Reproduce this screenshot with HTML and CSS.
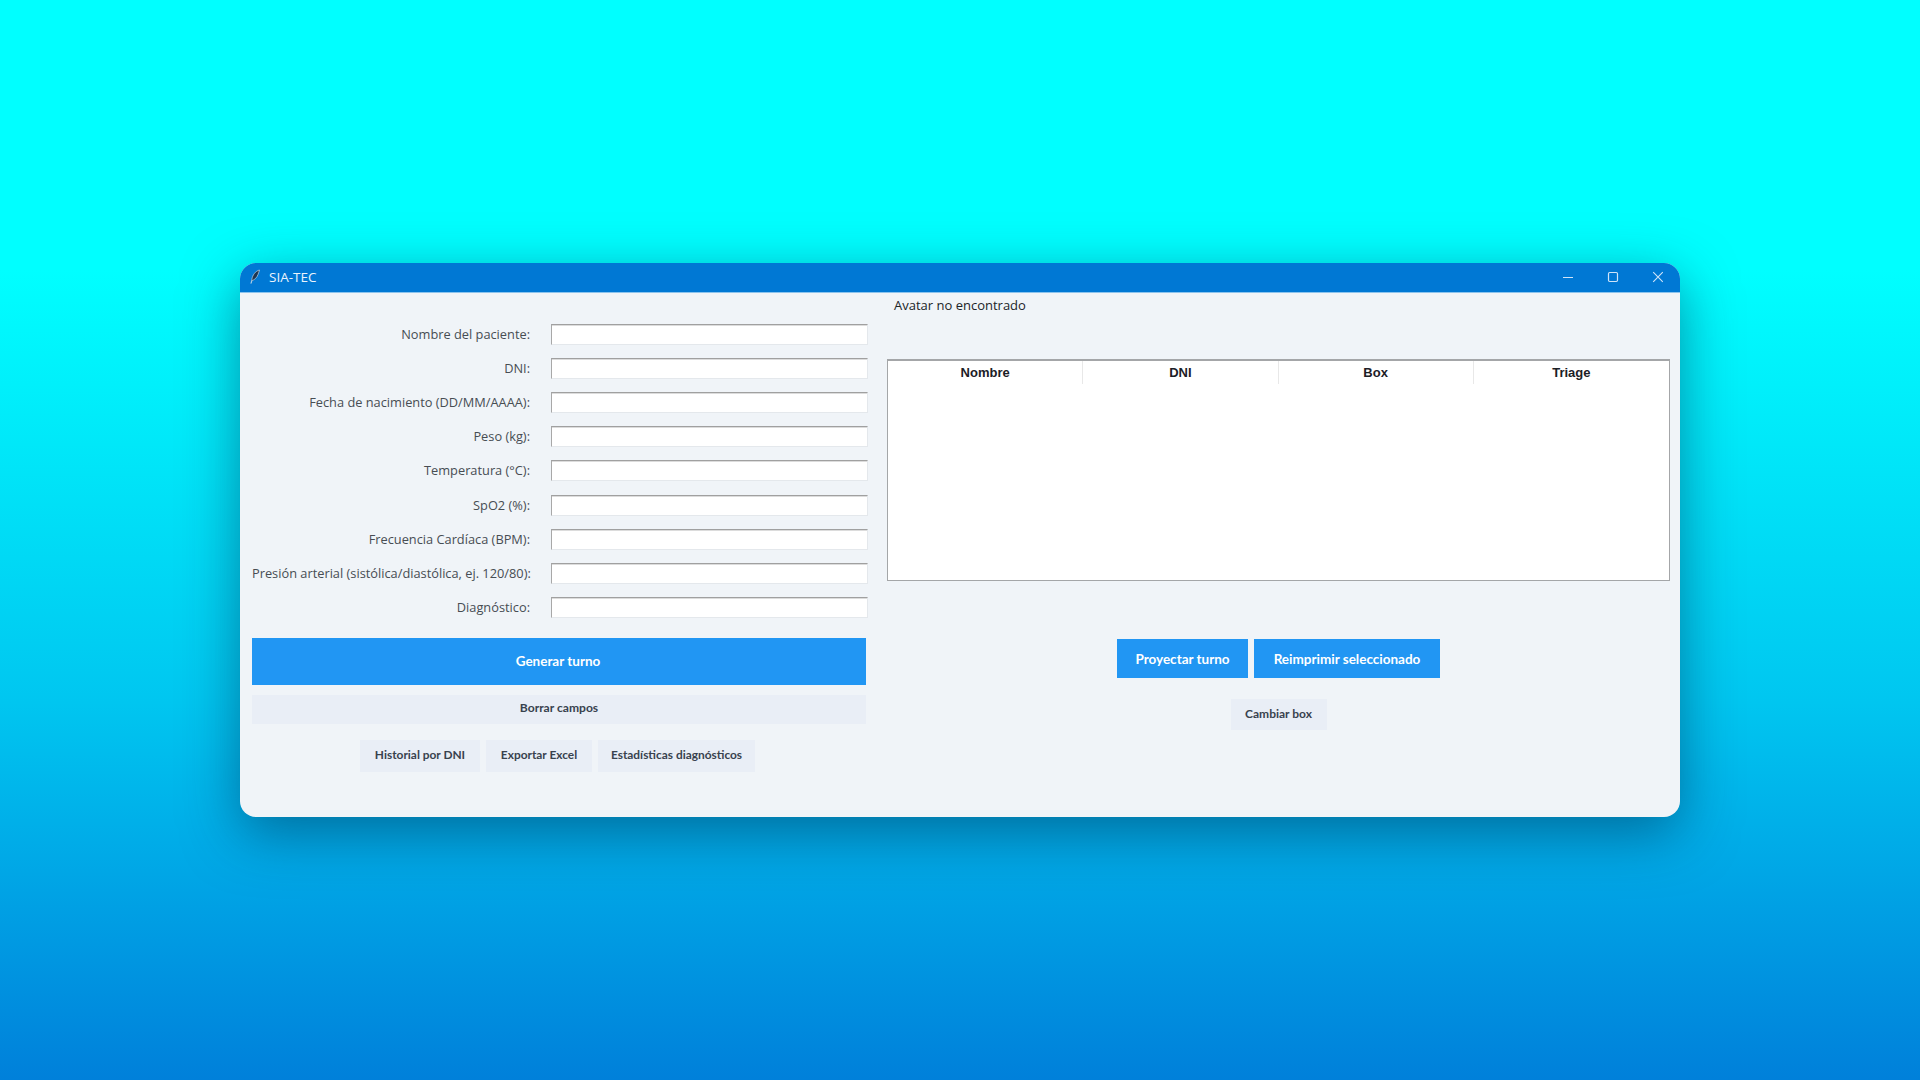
FILE: index.html
```html
<!DOCTYPE html>
<html lang="es">
<head>
<meta charset="utf-8">
<title>SIA-TEC</title>
<link rel="stylesheet" href="styles.css">
</head>
<body>
<div class="window">
  <header class="titlebar">
    <svg class="app-icon" width="14" height="16" viewBox="0 0 14 16"><path d="M11.5 1C7.5 2 4.5 6 3.8 10.5L3 14.5l1-3c2.5-.5 5-3 6-6 .6-1.7 1.2-3.2 1.5-4.5z" fill="#1d3550" stroke="#dfe8f0" stroke-width=".6"/></svg>
    <span class="app-title">SIA-TEC</span>
    <div class="controls">
      <svg width="12" height="12" viewBox="0 0 12 12"><path d="M1 6.5h10" stroke="#cfe4f8" stroke-width="1.2"/></svg>
      <svg width="12" height="12" viewBox="0 0 12 12"><rect x="1.5" y="1.5" width="9" height="9" rx="1.2" fill="none" stroke="#cfe4f8" stroke-width="1.2"/></svg>
      <svg width="12" height="12" viewBox="0 0 12 12"><path d="M1.2 1.2l9.6 9.6M10.8 1.2l-9.6 9.6" stroke="#cfe4f8" stroke-width="1.1"/></svg>
    </div>
  </header>
  <main class="content">
    <section class="left">
      <form class="form">
        <label>Nombre del paciente:</label><input type="text">
        <label>DNI:</label><input type="text">
        <label>Fecha de nacimiento (DD/MM/AAAA):</label><input type="text">
        <label>Peso (kg):</label><input type="text">
        <label>Temperatura (°C):</label><input type="text">
        <label>SpO2 (%):</label><input type="text">
        <label>Frecuencia Cardíaca (BPM):</label><input type="text">
        <label>Presión arterial (sistólica/diastólica, ej. 120/80):</label><input type="text">
        <label>Diagnóstico:</label><input type="text">
      </form>
      <button class="btn primary generate">Generar turno</button>
      <button class="btn secondary clear">Borrar campos</button>
      <div class="tools">
        <button class="btn secondary tool w-hist">Historial por DNI</button>
        <button class="btn secondary tool w-exp">Exportar Excel</button>
        <button class="btn secondary tool w-est">Estadísticas diagnósticos</button>
      </div>
    </section>
    <section class="right">
      <div class="avatar">Avatar no encontrado</div>
      <div class="table">
        <div class="thead">
          <div class="th">Nombre</div>
          <div class="th">DNI</div>
          <div class="th">Box</div>
          <div class="th">Triage</div>
        </div>
      </div>
      <div class="actions">
        <button class="btn primary action w-proy">Proyectar turno</button>
        <button class="btn primary action w-reim">Reimprimir seleccionado</button>
      </div>
      <button class="btn secondary change">Cambiar box</button>
    </section>
  </main>
</div>
</body>
</html>
```
FILE: styles.css
```css
* { box-sizing: border-box; }
html, body { height: 100%; }
body {
  margin: 0;
  display: flex;
  align-items: center;
  justify-content: center;
  background: linear-gradient(180deg, #00ffff 0%, #00ffff 25%, #00c6f0 65%, #0080da 100%);
  font-family: "Open Sans", "Noto Sans", sans-serif;
}
.window {
  width: 1440px;
  height: 554px;
  display: flex;
  flex-direction: column;
  background: #f0f4f8;
  border-radius: 16px;
  overflow: hidden;
  box-shadow: 0 16px 55px rgba(0, 40, 80, 0.5);
}
.titlebar {
  height: 30px;
  flex: none;
  display: flex;
  align-items: center;
  padding: 0 16px 2px 8px;
  background: #0078d4;
  border-bottom: 1px solid #8cc4ee;
  color: #eaf4fc;
}
.app-icon { flex: none; margin-right: 7px; }
.app-title { font-size: 13.5px; }
.controls {
  margin-left: auto;
  display: flex;
  gap: 33px;
  align-items: center;
}
.content {
  flex: 1;
  display: flex;
  min-height: 0;
}
.left {
  width: 627px;
  flex: none;
  padding: 31px 0 0 12px;
  display: flex;
  flex-direction: column;
}
.form {
  display: grid;
  grid-template-columns: 278px 316px;
  column-gap: 21px;
  row-gap: 13.12px;
}
.form label {
  text-align: right;
  font-size: 12.8px;
  line-height: 21px;
  color: #474d53;
  white-space: nowrap;
}
.form input {
  height: 21px;
  width: 317px;
  padding: 0;
  background: #fff;
  border: 1px solid #e4e8ec;
  border-top-color: #a0a0a0;
  border-left-color: #a8a8a8;
  box-shadow: inset 0 1px 0 #dcdcdc;
  outline: none;
}
.btn {
  border: 0;
  padding: 0;
  font-family: Lato, "Open Sans", sans-serif;
  font-weight: 700;
  text-align: center;
}
.primary { background: #2196f3; color: #fff; }
.secondary { background: #e9eef6; color: #38424e; }
.generate { width: 614px; height: 47px; margin-top: 20px; padding-right: 2px; padding-bottom: 1px; font-size: 13.5px; }
.clear { width: 614px; height: 29px; margin-top: 10px; padding-bottom: 4px; font-size: 12.1px; }
.tools {
  width: 614px;
  margin-top: 16px;
  display: flex;
  justify-content: center;
  gap: 6px;
  padding-right: 3px;
}
.tool { height: 32px; padding-bottom: 3px; font-size: 11.9px; }
.w-hist { width: 120px; }
.w-exp { width: 106px; }
.w-est { width: 157px; }
.right {
  flex: 1;
  min-width: 0;
  padding: 0 10px 0 20px;
  display: flex;
  flex-direction: column;
  align-items: center;
}
.avatar {
  align-self: flex-start;
  margin-left: 7px;
  height: 25px;
  line-height: 25px;
  font-size: 13px;
  color: #202428;
}
.table {
  width: 100%;
  height: 222px;
  margin-top: 41px;
  background: #fff;
  border: 1px solid #a4a6a8;
  border-top-width: 2px;
}
.thead { display: grid; grid-template-columns: repeat(4, 1fr); }
.th {
  height: 23px;
  line-height: 23px;
  text-align: center;
  font-size: 13px;
  font-weight: 700;
  color: #1c2026;
  border-right: 1px solid #e8e8e8;
  font-family: "Liberation Sans", sans-serif;
}
.th:last-child { border-right: 0; }
.actions {
  margin-top: 58px;
  display: flex;
  gap: 6px;
}
.action { height: 39px; font-size: 13.5px; }
.w-proy { width: 131px; }
.w-reim { width: 186px; }
.change {
  width: 96px;
  height: 31px;
  margin-top: 21px;
  padding-bottom: 2px;
  font-size: 12px;
}
```
